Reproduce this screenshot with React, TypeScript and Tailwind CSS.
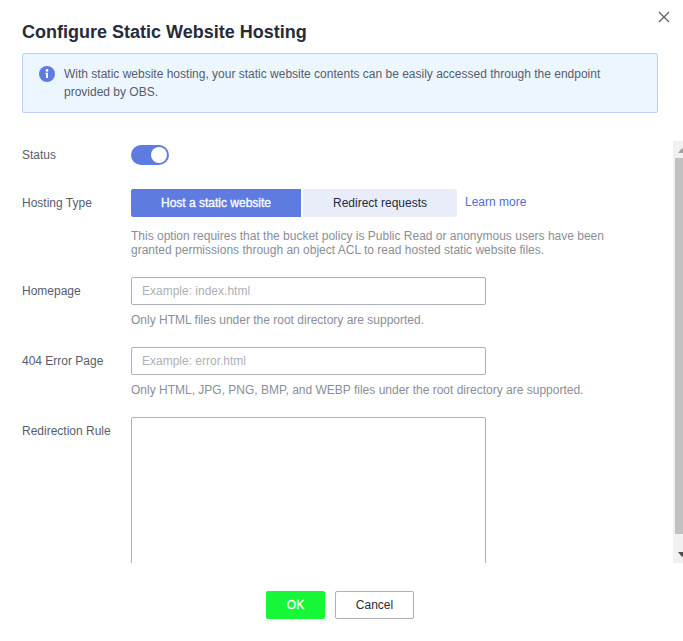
import React, { useState } from 'react';

const InfoIcon: React.FC = () => (
    <svg width="16" height="16" viewBox="0 0 16 16" className="shrink-0">
        <circle cx="8" cy="8" r="8" fill="#5e7ce0" />
        <circle cx="8" cy="4.4" r="1.3" fill="#fff" />
        <path d="M6.6 6.8H9v5.2h-2V8.2H6.6z" fill="#fff" />
    </svg>
);

const CloseIcon: React.FC = () => (
    <svg width="12" height="12" viewBox="0 0 12 12" fill="none" stroke="#575d6c" strokeWidth="1.2">
        <path d="M1 1l10 10M11 1L1 11" />
    </svg>
);

const Field: React.FC<{ label: string; placeholder: string; hint: string }> = ({ label, placeholder, hint }) => (
    <div className="flex mb-[20px]">
        <label className="w-[109px] shrink-0 h-7 leading-7">{label}</label>
        <div>
            <input
                placeholder={placeholder}
                className="block w-[355px] h-7 px-[10px] border border-[#adb0b8] rounded-[2px] outline-none placeholder:text-[#adb0b8]"
            />
            <p className="mt-[8px] leading-[14px] text-[#8a8e99]">{hint}</p>
        </div>
    </div>
);

const App: React.FC = () => {
    const [hostingType, setHostingType] = useState('static');

    return (
        <div className="relative w-[683px] h-[641px] bg-white text-xs text-[#575d6c] overflow-hidden font-['Liberation_Sans',sans-serif]">
            <button className="absolute top-[11px] right-[13px]"><CloseIcon /></button>

            <div className="px-[22px]">
                <h1 className="pt-[20px] h-[53px] text-lg leading-6 font-bold text-[#252b3a]">Configure Static Website Hosting</h1>
                <div className="flex gap-[9px] w-[636px] h-[60px] pl-4 pr-4 pt-[12px] bg-[#ebf6ff] border border-[#beccfa] rounded-[2px] leading-[18px]">
                    <InfoIcon />
                    <p className="-mt-px">With static website hosting, your static website contents can be easily accessed through the endpoint provided by OBS.</p>
                </div>
            </div>

            <div className="flex h-[422px] mt-[28px]">
                <div className="flex-1 pl-[22px] pt-[4px] overflow-hidden">
                    <div className="flex items-center h-5 mb-6">
                        <label className="w-[109px]">Status</label>
                        <div className="flex items-center justify-end w-[38px] h-5 pr-[2px] rounded-full bg-[#5e7ce0]">
                            <span className="w-4 h-4 rounded-full bg-white" />
                        </div>
                    </div>

                    <div className="flex mb-[20px]">
                        <label className="w-[109px] shrink-0 h-7 leading-7">Hosting Type</label>
                        <div>
                            <div className="flex items-center">
                                <button
                                    onClick={() => setHostingType('static')}
                                    className={hostingType === 'static'
                                        ? 'w-[170px] h-7 rounded-l-[2px] bg-[#5e7ce0] text-white [-webkit-text-stroke:0.3px_#fff]'
                                        : 'w-[170px] h-7 rounded-l-[2px] bg-[#e9edfa] text-[#252b3a]'}
                                >
                                    Host a static website
                                </button>
                                <button
                                    onClick={() => setHostingType('redirect')}
                                    className={hostingType === 'redirect'
                                        ? 'w-[154px] h-7 ml-[2px] rounded-r-[2px] bg-[#5e7ce0] text-white [-webkit-text-stroke:0.3px_#fff]'
                                        : 'w-[154px] h-7 ml-[2px] rounded-r-[2px] bg-[#e9edfa] text-[#252b3a]'}
                                >
                                    Redirect requests
                                </button>
                                <a className="ml-2 -mt-[2px] text-[#526ecc]">Learn more</a>
                            </div>
                            <p className="mt-[12px] w-[490px] leading-[14px] text-[#8a8e99]">
                                This option requires that the bucket policy is Public Read or anonymous users have been granted permissions through an object ACL to read hosted static website files.
                            </p>
                        </div>
                    </div>

                    <Field label="Homepage" placeholder="Example: index.html" hint="Only HTML files under the root directory are supported." />
                    <Field label="404 Error Page" placeholder="Example: error.html" hint="Only HTML, JPG, PNG, BMP, and WEBP files under the root directory are supported." />

                    <div className="flex">
                        <label className="w-[109px] shrink-0 h-7 leading-7">Redirection Rule</label>
                        <textarea className="block w-[355px] h-[200px] shrink-0 border border-[#adb0b8] rounded-[2px] outline-none resize-none" />
                    </div>
                </div>

                <div className="flex flex-col w-[10px] bg-[#f1f1f1] overflow-hidden">
                    <div className="flex justify-end h-[17px] pt-[7px] -mr-[3px]">
                        <svg width="8" height="5" viewBox="0 0 8 5"><path d="M4 0l4 5H0z" fill="#a3a3a3" /></svg>
                    </div>
                    <div className="h-[376px] ml-[2px] shrink-0 bg-[#c1c1c1]" />
                    <div className="flex justify-end mt-[18px] -mr-[3px]">
                        <svg width="8" height="5" viewBox="0 0 8 5"><path d="M0 0h8L4 5z" fill="#505050" /></svg>
                    </div>
                </div>
            </div>

            <div className="flex justify-center gap-[10px] mt-[28px] pr-[3px]">
                <button className="w-[59px] h-7 rounded-[2px] bg-[#15f737] text-white [-webkit-text-stroke:0.3px_#fff]">OK</button>
                <button className="w-[79px] h-7 rounded-[2px] border border-[#adb0b8] text-[#252b3a] bg-white">Cancel</button>
            </div>
        </div>
    );
};

export default App;
